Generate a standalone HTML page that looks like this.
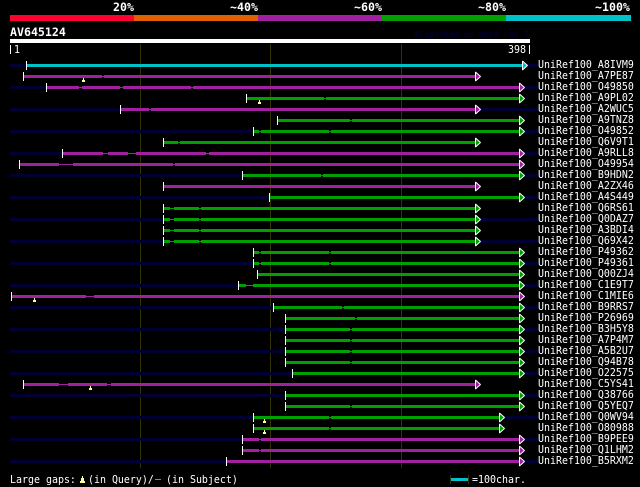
<!DOCTYPE html>
<html><head><meta charset="utf-8"><style>
html,body{margin:0;padding:0;background:#000;width:640px;height:487px;overflow:hidden}
svg{display:block}
text{font-family:"DejaVu Sans Mono","Liberation Mono",monospace;font-size:11px;fill:#fff}
.b{font-weight:bold;font-size:11.6px}
.s{stroke-width:3;fill:none}
.n{stroke-width:1;fill:none}
.t{stroke:#fff;stroke-width:1;stroke-linejoin:bevel}
</style></head><body>
<svg width="640" height="487" viewBox="0 0 640 487" xmlns="http://www.w3.org/2000/svg">
<rect width="640" height="487" fill="#000"/>
<text class="b" x="113" y="11">20%</text><text class="b" x="230" y="11">~40%</text><text class="b" x="354" y="11">~60%</text><text class="b" x="478" y="11">~80%</text><text class="b" x="595" y="11">~100%</text>
<g shape-rendering="crispEdges">
<rect x="10" y="15" width="124" height="6" fill="#ff0033"/><rect x="134" y="15" width="124" height="6" fill="#e06000"/><rect x="258" y="15" width="124" height="6" fill="#a020a0"/><rect x="382" y="15" width="124" height="6" fill="#00a000"/><rect x="506" y="15" width="125" height="6" fill="#00c0c8"/>
<rect x="10" y="39" width="520" height="4" fill="#fff"/>
<rect x="10" y="45" width="1" height="9" fill="#fff"/><rect x="529" y="45" width="1" height="9" fill="#fff"/>
<rect x="140" y="44" width="1" height="424" fill="#333300"/><rect x="270" y="44" width="1" height="424" fill="#333300"/><rect x="401" y="44" width="1" height="424" fill="#333300"/>
</g>
<text class="b" x="10" y="36">AV645124</text>
<text x="414" y="37" style="font-size:8.3px;font-weight:bold;fill:#000033">AlignView.pm Beta rel.7</text>

<path class="s" stroke="#000033" d="M10 65.5H26M527 65.5H538M10 87.5H46M523 87.5H538M10 109.5H120M480 109.5H538M10 131.5H253M523 131.5H538M10 153.5H62M523 153.5H538M10 175.5H242M523 175.5H538M10 197.5H269M523 197.5H538M480 219.5H538M10 219.5H163M10 241.5H163M480 241.5H538M10 263.5H253M523 263.5H538M10 285.5H238M523 285.5H538M10 307.5H273M523 307.5H538M10 329.5H285M523 329.5H538M10 351.5H285M523 351.5H538M10 373.5H292M523 373.5H538M10 395.5H285M523 395.5H538M10 417.5H253M504 417.5H538M10 439.5H242M523 439.5H538M10 461.5H226M523 461.5H538"/>

<path class="s" stroke="#00c0c8" d="M27 65.5H523"/>
<path class="s" stroke="#a020a0" d="M24 76.5H102M104 76.5H476M47 87.5H79M82 87.5H120M123 87.5H191M193 87.5H519M121 109.5H149M151 109.5H476M63 153.5H103M108 153.5H128M136 153.5H206M209 153.5H519M20 164.5H59M73 164.5H173M175 164.5H519M164 186.5H476M12 296.5H86M94 296.5H519M24 384.5H59M68 384.5H107M111 384.5H476M243 439.5H259M261 439.5H519M243 450.5H259M261 450.5H519M227 461.5H519"/>
<path class="n" stroke="#a020a0" d="M102 76.5H104M79 87.5H82M120 87.5H123M191 87.5H193M149 109.5H151M103 153.5H108M128 153.5H136M206 153.5H209M59 164.5H73M173 164.5H175M86 296.5H94M59 384.5H68M107 384.5H111M259 439.5H261M259 450.5H261"/>
<path class="s" stroke="#00a000" d="M247 98.5H324M326 98.5H519M278 120.5H350M352 120.5H519M254 131.5H259M261 131.5H329M331 131.5H519M164 142.5H178M180 142.5H476M243 175.5H321M323 175.5H519M270 197.5H519M164 208.5H170M174 208.5H199M201 208.5H476M164 219.5H170M174 219.5H199M201 219.5H476M164 230.5H170M174 230.5H199M201 230.5H476M164 241.5H170M174 241.5H199M201 241.5H476M254 252.5H259M261 252.5H329M331 252.5H519M254 263.5H259M261 263.5H329M331 263.5H519M258 274.5H519M239 285.5H246M253 285.5H519M274 307.5H342M344 307.5H519M286 318.5H355M357 318.5H519M286 329.5H350M352 329.5H519M286 340.5H350M352 340.5H519M286 351.5H350M352 351.5H519M286 362.5H350M352 362.5H519M293 373.5H519M286 395.5H519M286 406.5H350M352 406.5H519M254 417.5H329M331 417.5H500M254 428.5H329M331 428.5H500"/>
<path class="n" stroke="#00a000" d="M324 98.5H326M350 120.5H352M259 131.5H261M329 131.5H331M178 142.5H180M321 175.5H323M170 208.5H174M199 208.5H201M170 219.5H174M199 219.5H201M170 230.5H174M199 230.5H201M170 241.5H174M199 241.5H201M259 252.5H261M329 252.5H331M259 263.5H261M329 263.5H331M246 285.5H253M342 307.5H344M355 318.5H357M350 329.5H352M350 340.5H352M350 351.5H352M350 362.5H352M350 406.5H352M329 417.5H331M329 428.5H331"/>

<path class="n" stroke="#fff" d="M26.5 61v9M23.5 72v9M46.5 83v9M246.5 94v9M120.5 105v9M277.5 116v9M253.5 127v9M163.5 138v9M62.5 149v9M19.5 160v9M242.5 171v9M163.5 182v9M269.5 193v9M163.5 204v9M163.5 215v9M163.5 226v9M163.5 237v9M253.5 248v9M253.5 259v9M257.5 270v9M238.5 281v9M11.5 292v9M273.5 303v9M285.5 314v9M285.5 325v9M285.5 336v9M285.5 347v9M285.5 358v9M292.5 369v9M23.5 380v9M285.5 391v9M285.5 402v9M253.5 413v9M253.5 424v9M242.5 435v9M242.5 446v9M226.5 457v9"/>

<path class="t" fill="#00c0c8" d="M522.5 61v9l5-4.5z"/>
<path class="t" fill="#a020a0" d="M475.5 72v9l5-4.5zM519.5 83v9l5-4.5zM475.5 105v9l5-4.5zM519.5 149v9l5-4.5zM519.5 160v9l5-4.5zM475.5 182v9l5-4.5zM519.5 292v9l5-4.5zM475.5 380v9l5-4.5zM519.5 435v9l5-4.5zM519.5 446v9l5-4.5zM519.5 457v9l5-4.5z"/>
<path class="t" fill="#00a000" d="M519.5 94v9l5-4.5zM519.5 116v9l5-4.5zM519.5 127v9l5-4.5zM475.5 138v9l5-4.5zM519.5 171v9l5-4.5zM519.5 193v9l5-4.5zM475.5 204v9l5-4.5zM475.5 215v9l5-4.5zM475.5 226v9l5-4.5zM475.5 237v9l5-4.5zM519.5 248v9l5-4.5zM519.5 259v9l5-4.5zM519.5 270v9l5-4.5zM519.5 281v9l5-4.5zM519.5 303v9l5-4.5zM519.5 314v9l5-4.5zM519.5 325v9l5-4.5zM519.5 336v9l5-4.5zM519.5 347v9l5-4.5zM519.5 358v9l5-4.5zM519.5 369v9l5-4.5zM519.5 391v9l5-4.5zM519.5 402v9l5-4.5zM499.5 413v9l5-4.5zM499.5 424v9l5-4.5z"/>

<g fill="#ffff99" shape-rendering="crispEdges">
<rect x="83" y="78" width="1" height="2"/><rect x="82" y="80" width="3" height="2"/>
<rect x="259" y="100" width="1" height="2"/><rect x="258" y="102" width="3" height="2"/>
<rect x="34" y="298" width="1" height="2"/><rect x="33" y="300" width="3" height="2"/>
<rect x="90" y="386" width="1" height="2"/><rect x="89" y="388" width="3" height="2"/>
<rect x="264" y="419" width="1" height="2"/><rect x="263" y="421" width="3" height="2"/>
<rect x="264" y="430" width="1" height="2"/><rect x="263" y="432" width="3" height="2"/>
<rect x="82" y="476" width="1" height="2"/><rect x="81" y="478" width="3" height="3"/><rect x="80" y="481" width="5" height="2"/>
</g>

<g transform="scale(.906,1)">
<text x="15.45" y="53">1</text><text x="560.7" y="53">398</text>
<text x="593.8" y="68">UniRef100_A8IVM9</text><text x="593.8" y="79">UniRef100_A7PE87</text><text x="593.8" y="90">UniRef100_O49850</text><text x="593.8" y="101">UniRef100_A9PL02</text><text x="593.8" y="112">UniRef100_A2WUC5</text><text x="593.8" y="123">UniRef100_A9TNZ8</text><text x="593.8" y="134">UniRef100_O49852</text><text x="593.8" y="145">UniRef100_Q6V9T1</text><text x="593.8" y="156">UniRef100_A9RLL8</text><text x="593.8" y="167">UniRef100_O49954</text><text x="593.8" y="178">UniRef100_B9HDN2</text><text x="593.8" y="189">UniRef100_A2ZX46</text><text x="593.8" y="200">UniRef100_A4S449</text><text x="593.8" y="211">UniRef100_Q6RS61</text><text x="593.8" y="222">UniRef100_Q0DAZ7</text><text x="593.8" y="233">UniRef100_A3BDI4</text><text x="593.8" y="244">UniRef100_Q69X42</text><text x="593.8" y="255">UniRef100_P49362</text><text x="593.8" y="266">UniRef100_P49361</text><text x="593.8" y="277">UniRef100_Q00ZJ4</text><text x="593.8" y="288">UniRef100_C1E9T7</text><text x="593.8" y="299">UniRef100_C1MIE6</text><text x="593.8" y="310">UniRef100_B9RRS7</text><text x="593.8" y="321">UniRef100_P26969</text><text x="593.8" y="332">UniRef100_B3H5Y8</text><text x="593.8" y="343">UniRef100_A7P4M7</text><text x="593.8" y="354">UniRef100_A5B2U7</text><text x="593.8" y="365">UniRef100_Q94B78</text><text x="593.8" y="376">UniRef100_O22575</text><text x="593.8" y="387">UniRef100_C5YS41</text><text x="593.8" y="398">UniRef100_Q38766</text><text x="593.8" y="409">UniRef100_Q5YEQ7</text><text x="593.8" y="420">UniRef100_Q0WV94</text><text x="593.8" y="431">UniRef100_O80988</text><text x="593.8" y="442">UniRef100_B9PEE9</text><text x="593.8" y="453">UniRef100_Q1LHM2</text><text x="593.8" y="464">UniRef100_B5RXM2</text>
<text x="11.04" y="483">Large gaps:</text>
<text x="97.1" y="483">(in Query)/</text>
<text x="183.2" y="483">(in Subject)</text>
<text x="521" y="483">=100char.</text>
</g>
<rect x="155" y="479" width="6" height="1" fill="#00c0c8" shape-rendering="crispEdges"/>
<g shape-rendering="crispEdges"><rect x="450" y="475" width="1" height="9" fill="#333300"/><rect x="468" y="475" width="1" height="9" fill="#333300"/><rect x="451" y="478" width="17" height="3" fill="#00c0c8"/></g>
</svg>
</body></html>
